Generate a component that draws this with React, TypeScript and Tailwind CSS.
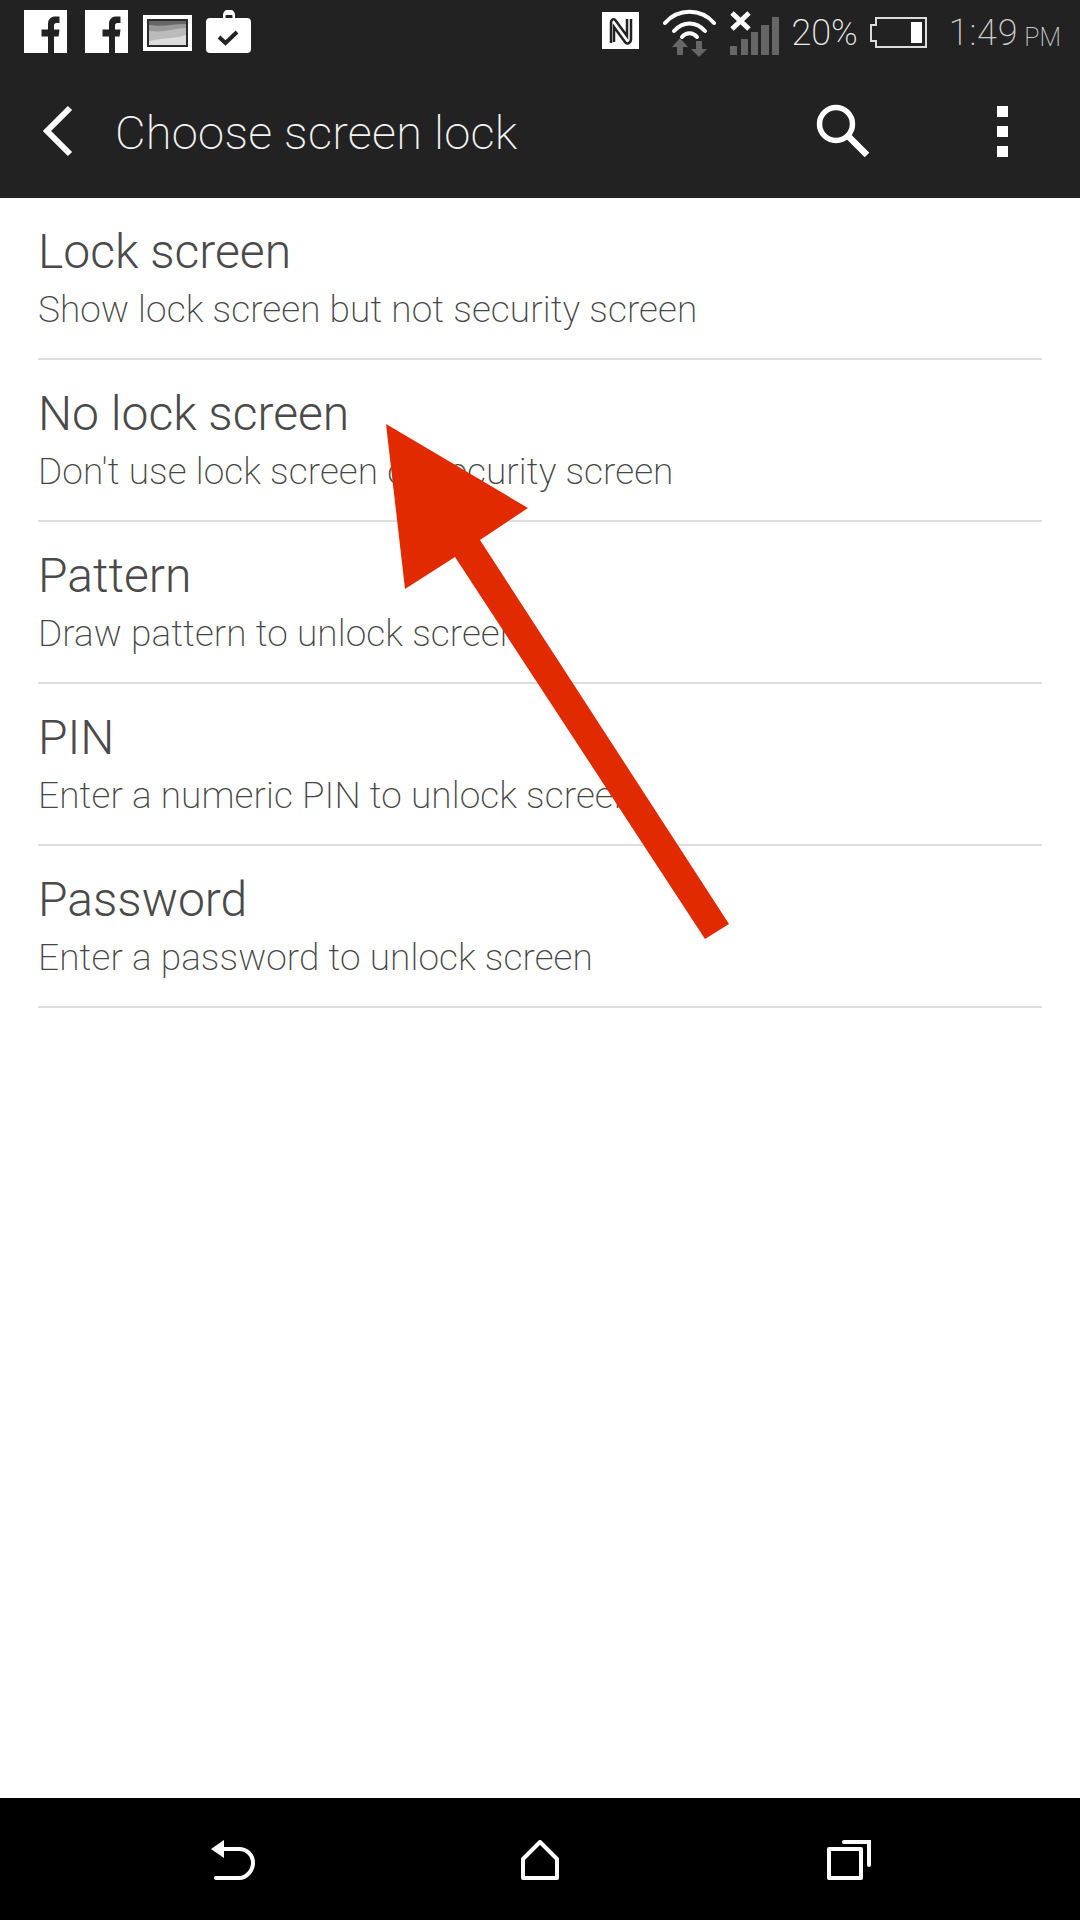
const rows = [
  { title: 'Lock screen', sub: 'Show lock screen but not security screen' },
  { title: 'No lock screen', sub: "Don't use lock screen or security screen" },
  { title: 'Pattern', sub: 'Draw pattern to unlock screen' },
  { title: 'PIN', sub: 'Enter a numeric PIN to unlock screen' },
  { title: 'Password', sub: 'Enter a password to unlock screen' },
];

function FbIcon({ className }: { className?: string }) {
  return (
    <svg width="43" height="43" viewBox="0 0 43 43" className={className}>
      <rect width="43" height="43" fill="#fff" />
      <path d="M24 43V26.5H17.5V19.5H24V14C24 9 27 6.5 31.5 6.5H35.5V13H32.5C30.7 13 30 14 30 15.8V19.5H35.5L34.6 26.5H30V43Z" fill="#222" />
    </svg>
  );
}

function PictureIcon() {
  return (
    <svg width="49" height="36" viewBox="0 0 49 36" className="ml-[15px] mt-[5px]">
      <rect width="49" height="36" fill="#fff" />
      <rect x="4" y="4" width="41" height="28" fill="#2a2a2a" />
      <rect x="6" y="6" width="37" height="24" fill="#ddd" />
      <path d="M6 6H43V20C34 24 24 22 6 26Z" fill="#bbb" />
      <path d="M6 6H43V13C32 13 22 18 6 16Z" fill="#999" />
      <path d="M6 6H43V9C30 9 20 12 6 10Z" fill="#666" />
    </svg>
  );
}

function BriefcaseIcon() {
  return (
    <svg width="45" height="43" viewBox="0 0 45 43" className="ml-[14px]">
      <path d="M17 9V5C17 2 19 0 21 0H25C27 0 29 2 29 5V9Z" fill="#fff" />
      <rect x="19.5" y="5" width="7" height="4" rx="1" fill="#222" />
      <rect y="8" width="45" height="35" rx="4" fill="#fff" />
      <path d="M13 27L19.5 33L31 22" fill="none" stroke="#222" strokeWidth="4" />
    </svg>
  );
}

function NfcIcon() {
  return (
    <svg width="37" height="37" viewBox="0 0 37 37" className="mt-[2px]">
      <rect width="37" height="37" fill="#fff" />
      <path d="M9 31V11C9 7 12 6 14 9L25 24V7" fill="none" stroke="#222" strokeWidth="2.5" />
      <path d="M12 30V15L23 30C25 33 29 31 29 27V7" fill="none" stroke="#222" strokeWidth="2.5" />
    </svg>
  );
}

function WifiIcon() {
  return (
    <svg width="53" height="52" viewBox="0 0 53 52" className="ml-[24px] -mt-[3px]">
      <g fill="none" stroke="#fff" strokeWidth="4" strokeLinecap="round">
        <path d="M2 16C15 1 38 1 51 16" />
        <path d="M11 24C20 14 33 14 42 24" />
        <path d="M19 30C23 25 30 25 34 30" />
      </g>
      <path d="M17 31L25 40H20V48H14V40H9Z" fill="#666" />
      <path d="M36 50L28 42H33V34H39V42H44Z" fill="#666" />
    </svg>
  );
}

function SignalIcon() {
  return (
    <svg width="49" height="45" viewBox="0 0 49 45" className="ml-[14px]">
      <g fill="#666">
        <rect y="36" width="7" height="9" />
        <rect x="11" y="29" width="7" height="16" />
        <rect x="21" y="22" width="7" height="23" />
        <rect x="31" y="15" width="8" height="30" />
        <rect x="42" y="7" width="7" height="38" />
      </g>
      <path d="M2 3L19 19M19 3L2 19" stroke="#fff" strokeWidth="5" />
    </svg>
  );
}

function BatteryIcon() {
  return (
    <svg width="58" height="31" viewBox="0 0 58 31" className="ml-[11px] mt-[7px]">
      <path d="M7 1H57V30H7V24H2V8H7Z" fill="none" stroke="#ddd" strokeWidth="2" />
      <rect x="42" y="5" width="11" height="21" fill="#fff" />
    </svg>
  );
}

export default function App() {
  return (
    <div className="relative flex h-[1920px] w-[1080px] flex-col overflow-hidden bg-white [font-family:Roboto,sans-serif]">
      <header className="h-[198px] bg-[#222222]">
        <div className="flex h-[64px] items-start pl-[24px] pt-[10px]">
          <FbIcon />
          <FbIcon className="ml-[18px]" />
          <PictureIcon />
          <BriefcaseIcon />
          <div className="ml-auto flex items-start pr-[19px]">
            <NfcIcon />
            <WifiIcon />
            <SignalIcon />
            <span className="ml-[12px] mt-[1px] text-[36px] leading-[44px] font-extralight text-[#eeeeee]">20%</span>
            <BatteryIcon />
            <span className="ml-[22px] mt-[1px] text-[36px] leading-[44px] tracking-[0.8px] font-extralight text-[#cccccc]">1:49</span>
            <span className="ml-[6px] mt-[13px] text-[25px] leading-[30px] font-extralight text-[#cccccc]">PM</span>
          </div>
        </div>
        <div className="flex h-[134px] items-center">
          <svg width="36" height="52" viewBox="0 0 36 52" className="ml-[39px]">
            <path d="M31 3L8 26L31 49" fill="none" stroke="#fff" strokeWidth="6" />
          </svg>
          <h1 className="ml-[40px] pt-[3px] text-[47px] leading-[56px] tracking-[0.28px] font-extralight text-[#f2f2f2]">Choose screen lock</h1>
          <svg width="56" height="56" viewBox="0 0 56 56" className="ml-auto">
            <circle cx="21" cy="21" r="16.5" fill="none" stroke="#fff" strokeWidth="5.5" />
            <path d="M33 33L52 52" stroke="#fff" strokeWidth="6.5" />
          </svg>
          <div className="ml-[126px] mr-[72px] flex flex-col gap-[9px]">
            <div className="h-[11px] w-[11px] bg-white" />
            <div className="h-[11px] w-[11px] bg-white" />
            <div className="h-[11px] w-[11px] bg-white" />
          </div>
        </div>
      </header>

      <main className="flex-1 px-[38px]">
        {rows.map(row => (
          <div key={row.title} className="h-[162px] border-b-2 border-[#dddddd] pt-[21px]">
            <div className="text-[48px] leading-[66px] font-light text-[#4a4a4a]">{row.title}</div>
            <div className="text-[37px] leading-[49px] tracking-[0.1px] font-extralight text-[#444444]">{row.sub}</div>
          </div>
        ))}
      </main>

      <nav className="flex h-[122px] items-start bg-black pt-[42px]">
        <svg width="44" height="40" viewBox="0 0 44 40" className="ml-[211px]">
          <path d="M5 38H28C36 38 42 30 42 23C42 15 36 9 28 9H12" fill="none" stroke="#fff" strokeWidth="4" strokeLinecap="round" />
          <path d="M0 9L13 0V18Z" fill="#fff" />
        </svg>
        <svg width="38" height="40" viewBox="0 0 38 40" className="ml-[266px]">
          <path d="M19 2L36 19V38H2V19Z" fill="none" stroke="#fff" strokeWidth="4" strokeLinejoin="round" />
        </svg>
        <svg width="44" height="40" viewBox="0 0 44 40" className="ml-[268px]">
          <rect x="2" y="9" width="32" height="29" fill="none" stroke="#fff" strokeWidth="4" strokeLinejoin="round" />
          <path d="M17 2H42V25" fill="none" stroke="#fff" strokeWidth="4" strokeLinecap="round" />
        </svg>
      </nav>

      {/* annotation arrow drawn over the list */}
      <svg width="1080" height="1920" viewBox="0 0 1080 1920" className="pointer-events-none absolute inset-0">
        <path d="M386 424L528 508L480 540L729 924L705 939L455 557L405 589Z" fill="#e22a00" />
      </svg>
    </div>
  );
}
